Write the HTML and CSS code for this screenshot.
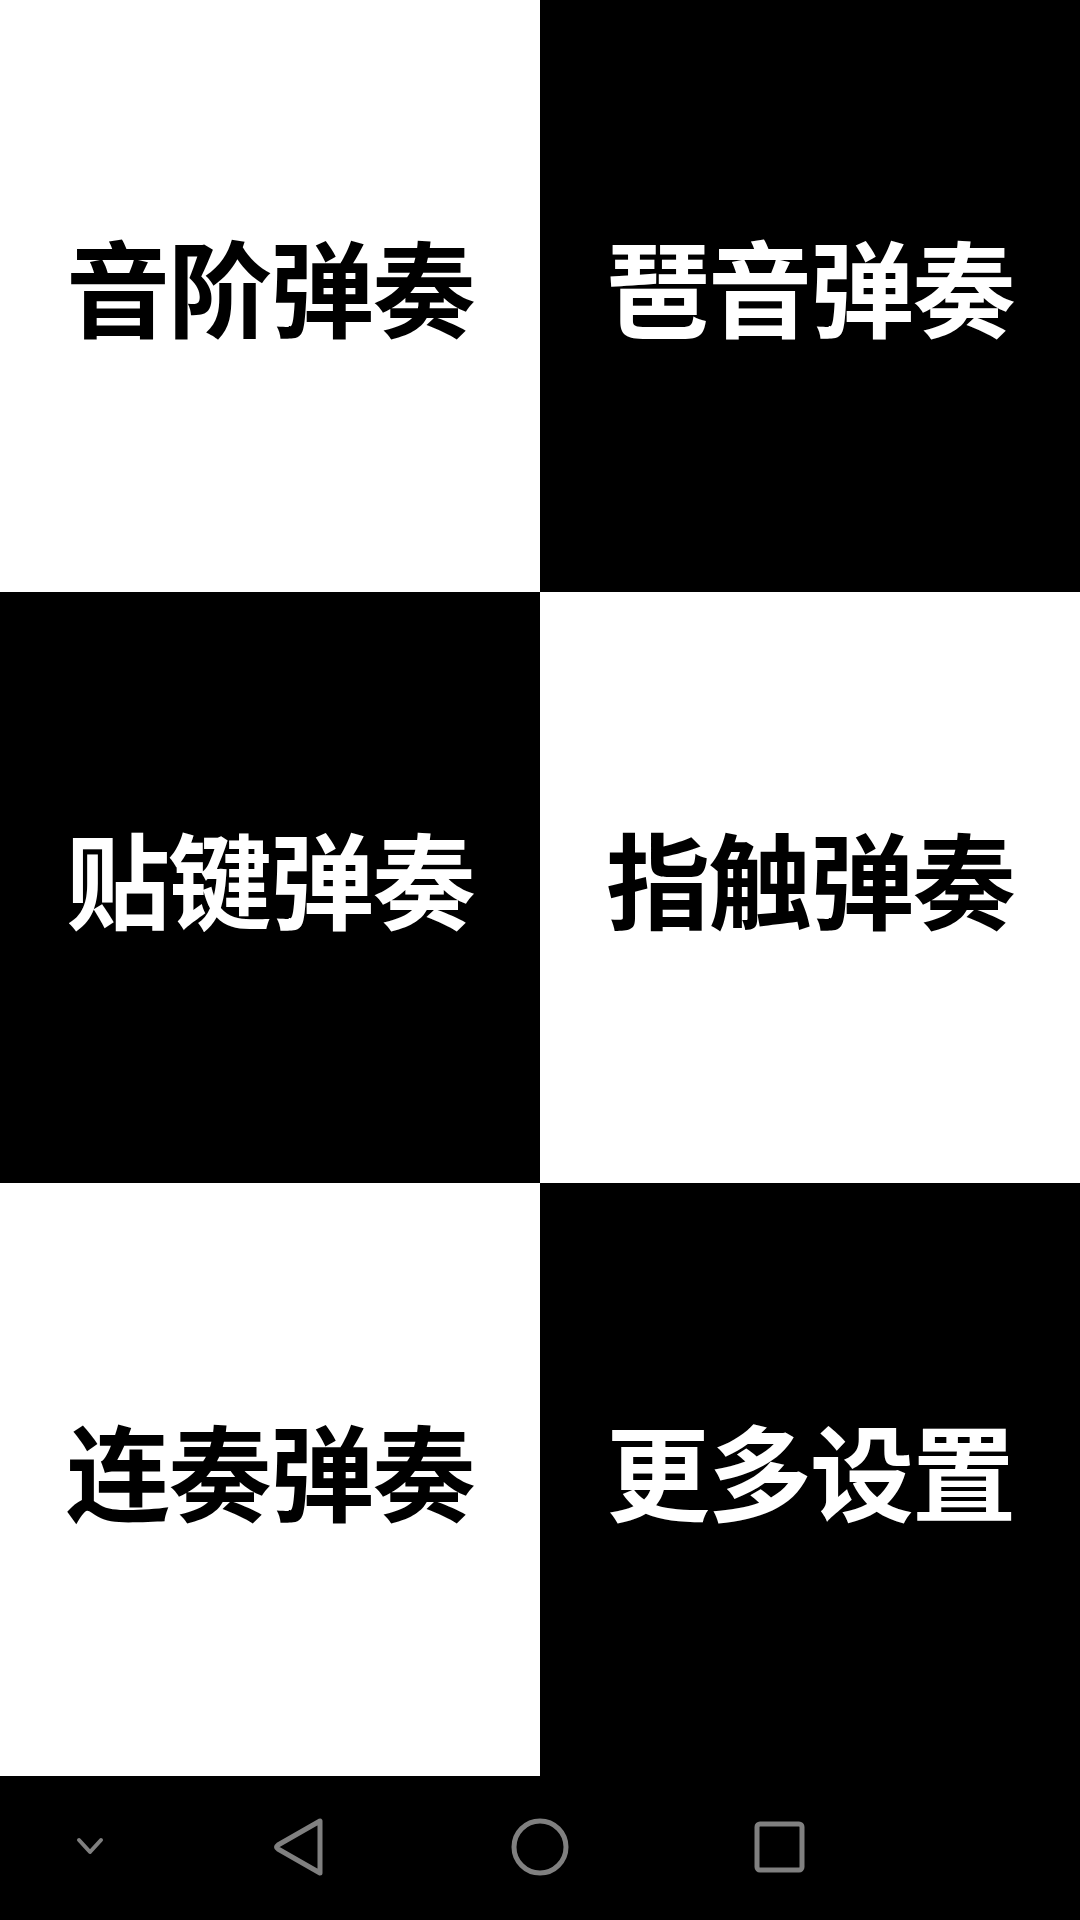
FILE: index.html
```html
<!DOCTYPE html>
<html lang="zh-CN">
<head>
    <meta charset="UTF-8">
    <meta name="viewport" content="width=device-width, initial-scale=1.0">
    <title>弹奏</title>
    <link rel="stylesheet" href="styles.css">
</head>
<body>
    <div id="main">
        <div class="grid">
            <div class="tile light"><span>音阶弹奏</span></div>
            <div class="tile dark"><span>琶音弹奏</span></div>
            <div class="tile dark"><span>贴键弹奏</span></div>
            <div class="tile light"><span>指触弹奏</span></div>
            <div class="tile light"><span>连奏弹奏</span></div>
            <div class="tile dark"><span>更多设置</span></div>
        </div>
        <div class="navbar">
            <div class="nav-btn">
                <svg width="30" height="20" viewBox="0 0 30 20">
                    <polyline points="4,3 15,15 26,3" fill="none" stroke="#808080" stroke-width="4" stroke-linejoin="round" stroke-linecap="round"/>
                </svg>
            </div>
            <div class="nav-btn">
                <svg width="56" height="60" viewBox="0 0 56 60">
                    <path d="M48,4 L48,56 L6,32 Q3,30 6,28 Z" fill="none" stroke="#808080" stroke-width="5" stroke-linejoin="round"/>
                </svg>
            </div>
            <div class="nav-btn">
                <svg width="62" height="62" viewBox="0 0 62 62">
                    <circle cx="31" cy="31" r="26" fill="none" stroke="#808080" stroke-width="5"/>
                </svg>
            </div>
            <div class="nav-btn">
                <svg width="54" height="54" viewBox="0 0 54 54">
                    <rect x="4" y="4" width="45" height="46" rx="3" fill="none" stroke="#808080" stroke-width="5"/>
                </svg>
            </div>
        </div>
    </div>
</body>
</html>
```

FILE: styles.css
```css
html, body {
    margin: 0;
    padding: 0;
    background: #000;
}
#main {
    width: 1080px;
    height: 1920px;
    display: flex;
    flex-direction: column;
}
.grid {
    display: grid;
    grid-template-columns: 540px 540px;
    grid-template-rows: 592px 591px 593px;
}
.tile {
    display: flex;
    align-items: center;
    justify-content: center;
    padding-bottom: 22px;
    box-sizing: border-box;
}
.tile span {
    font-family: "Noto Sans CJK SC", sans-serif;
    font-weight: 700;
    font-size: 104px;
    line-height: 1;
    letter-spacing: -2px;
}
.light {
    background: #fff;
    color: #000;
}
.dark {
    background: #000;
    color: #fff;
}
.navbar {
    flex: 1;
    display: flex;
    align-items: center;
    background: #000;
    padding-bottom: 2px;
}
.nav-btn {
    display: flex;
    align-items: center;
    justify-content: center;
}
.nav-btn:nth-child(1) {
    width: 180px;
}
.nav-btn:nth-child(2) {
    width: 240px;
}
.nav-btn:nth-child(3) {
    width: 240px;
}
.nav-btn:nth-child(4) {
    width: 240px;
}
```
